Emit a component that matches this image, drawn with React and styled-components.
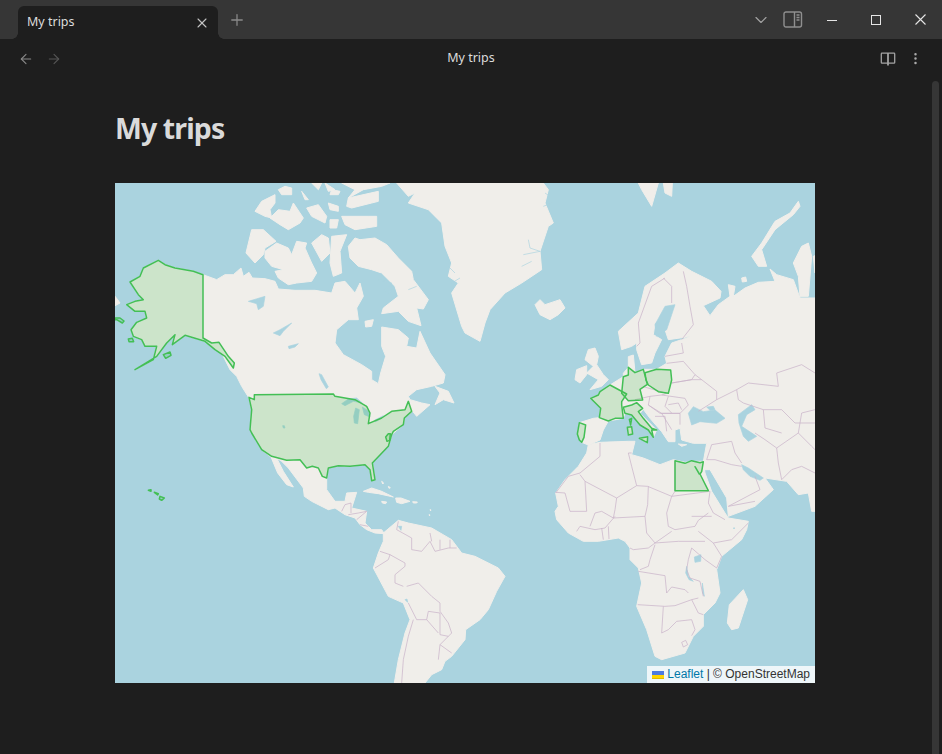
import React from "react";
import styled, { createGlobalStyle } from "styled-components";
import { ArrowLeft, ArrowRight, ChevronDown, EllipsisVertical, Plus, X } from "lucide-react";

const GlobalStyle = createGlobalStyle`
  html, body {
    margin: 0;
    height: 100%;
    background: #1e1e1e;
    overflow: hidden;
    font-family: "Noto Sans", "Open Sans", sans-serif;
  }
`;

// map data, in units of a third of a pixel (700x500 map = 2100x1500)
const LAND = [
  // north + central america
  "130,232 150,245 180,255 235,265 264,275 305,290 330,275 355,275 378,255 385,280 402,268 412,285 450,287 480,295 490,318 540,322 600,322 650,330 660,300 690,295 720,330 735,300 745,340 725,375 730,410 700,410 665,440 660,480 685,515 740,545 770,565 770,590 790,602 797,570 812,520 800,490 800,432 850,440 880,465 875,490 905,495 915,445 945,510 990,575 985,600 950,610 905,620 880,640 885,650 920,660 945,665 905,700 893,685 868,705 865,725 830,755 820,790 772,840 780,890 770,893 765,860 750,845 705,850 670,848 640,855 635,885 635,920 660,955 690,955 695,930 725,928 710,975 755,985 750,1020 770,1040 800,1040 808,1052 780,1050 755,1040 735,1025 720,1005 690,995 660,975 640,980 590,955 568,940 565,915 520,855 500,835 485,825 505,865 535,912 515,905 488,870 468,822 440,800 410,750 405,740 410,680 402,645 380,610 365,580 345,560 320,510 300,500 270,475 210,457 172,485 180,455 155,480 125,520 60,560 115,530 125,490 90,490 80,470 55,460 48,440 65,418 95,405 90,385 60,385 35,365 60,355 85,350 70,335 45,297 75,280 85,255",
  // arctic islands
  "735,170 780,165 815,185 850,225 890,265 895,290 940,350 925,378 905,375 918,428 880,415 850,385 800,392 805,375 850,340 840,310 800,270 770,260 730,250 705,225 700,190 720,165",
  "700,45 745,20 800,10 825,0 680,0 720,20",
  "700,45 790,25 790,55 770,60 710,75 695,70",
  "680,100 760,100 785,100 785,130 720,140 690,125",
  "575,75 610,65 635,100 630,120 590,100",
  "640,60 670,70 670,85 645,80",
  "645,110 670,110 665,135 645,135",
  "420,85 440,55 480,35 480,60 465,80 470,105 450,100",
  "465,105 490,80 525,85 535,60 565,105 555,120 520,140 495,125",
  "410,140 445,140 483,175 450,195 445,215 420,240 393,210",
  "450,205 485,180 520,195 530,215 545,175 575,180 570,195 590,240 605,270 590,295 545,300 520,305 490,285 480,265 505,260 470,250 450,225",
  "590,180 620,155 640,165 645,210 620,235",
  "650,160 695,155 675,205 680,270 655,280 645,240",
  "490,20 510,10 530,15 530,35 500,35",
  "560,25 580,50 570,50",
  "590,0 620,0 610,20",
  "630,0 660,20 640,25",
  "650,20 675,25 670,35 645,35",
  "750,415 775,410 770,430 752,432",
  "960,610 1000,625 1017,660 985,650 960,665 975,630",
  "0,340 8,350 15,360 0,368",
  // cuba, hispaniola, jamaica, puerto rico, antilles
  "745,925 770,915 800,925 835,942 790,932 760,928",
  "842,945 858,945 885,955 860,962 845,958",
  "800,955 815,957 812,962 802,960",
  "893,956 907,957 905,960 895,960",
  "945,980 947,980 947,984",
  "942,995 944,995 944,999",
  "800,895 806,900 803,903",
  "820,910 826,914 822,916",
  // south america
  "805,1050 850,1012 880,1020 950,1035 1010,1070 1040,1110 1080,1120 1150,1155 1170,1180 1145,1225 1120,1280 1095,1310 1052,1340 1050,1370 1010,1420 990,1435 980,1460 950,1475 930,1500 838,1500 850,1430 870,1350 885,1310 865,1260 820,1240 775,1155 790,1110 805,1075",
  // greenland
  "845,0 880,40 900,30 880,60 940,80 980,120 990,190 1010,240 1000,280 1030,300 1010,330 1040,430 1050,450 1095,475 1110,420 1125,380 1170,330 1220,300 1280,260 1275,205 1300,130 1315,120 1290,60 1300,20 1285,0",
  // iceland, uk, ireland
  "1260,365 1275,350 1290,365 1335,350 1350,375 1330,395 1305,410 1275,395 1265,375",
  "1420,500 1440,495 1450,520 1445,545 1465,575 1480,590 1460,610 1425,620 1450,590 1415,570 1435,550 1410,530",
  "1385,560 1415,548 1415,575 1395,600 1380,590",
  // svalbard, novaya zemlya and friends
  "1570,0 1630,0 1610,70 1580,20",
  "1645,0 1672,0 1670,40 1650,30",
  "2050,55 2025,90 1980,115 1940,180 1910,220 1930,250 1955,250 1940,200 1980,140 2035,95 2055,70",
  "2035,240 2060,190 2080,180 2090,220 2080,340 2055,340 2050,280",
  "2095,220 2100,218 2100,270",
  "1880,285 1892,282 1895,295 1882,297",
  // corsica, sardinia, sicily, crete
  "1543,709 1550,706 1547,726",
  "1537,733 1550,731 1553,753 1540,756",
  "1573,766 1598,761 1597,779",
  "1690,783 1715,785 1700,790",
  // eurasia
  "2100,345 2055,345 2035,290 1985,275 1965,258 1980,295 1930,298 1890,315 1855,340 1860,310 1840,305 1845,340 1810,365 1785,398 1765,368 1815,345 1818,325 1790,295 1730,265 1690,240 1650,270 1590,310 1570,390 1510,445 1520,500 1550,490 1565,480 1565,500 1580,545 1610,540 1620,510 1640,470 1615,455 1620,420 1660,385 1680,365 1650,440 1660,470 1730,460 1670,480 1650,520 1655,541 1625,559 1585,559 1560,569 1555,516 1540,521 1540,553 1525,571 1525,581 1485,606 1455,626 1450,636 1427,646 1457,676 1453,704 1435,706 1393,719 1387,753 1400,778 1420,786 1455,771 1465,741 1480,714 1525,706 1530,691 1550,696 1575,726 1600,741 1615,763 1625,741 1575,691 1585,679 1605,706 1640,746 1660,776 1680,776 1680,741 1695,736 1700,771 1735,781 1775,781 1765,836 1762,860 1785,860 1835,945 1840,1000 1920,970 1975,920 1950,885 2015,895 2050,935 2080,930 2090,985 2100,985",
  // africa
  "1420,785 1455,778 1540,775 1560,775 1550,815 1585,825 1635,845 1675,830 1710,838 1740,835 1765,835 1770,870 1790,925 1830,990 1840,1005 1900,1015 1895,1040 1880,1070 1820,1120 1805,1160 1815,1230 1800,1260 1765,1295 1765,1330 1735,1360 1710,1410 1640,1430 1620,1420 1595,1340 1565,1270 1580,1200 1570,1155 1545,1130 1545,1095 1530,1075 1510,1065 1450,1075 1405,1075 1360,1050 1325,1010 1320,985 1330,970 1322,930 1350,890 1390,850 1415,810",
  // madagascar
  "1885,1220 1898,1250 1870,1335 1850,1340 1837,1320 1843,1265",
];

const WATER = [
  // black sea, azov, caspian, persian gulf, bothnia
  "1720,691 1735,671 1765,686 1800,681 1830,706 1805,721 1755,716 1730,726",
  "1775,672 1795,670 1800,680 1785,682",
  "1910,665 1920,680 1895,695 1880,730 1925,760 1900,775 1885,760 1872,720 1870,695",
  "1880,845 1900,855 1945,885 1935,892 1905,880 1885,860",
  "1650,370 1680,365 1670,395 1655,440 1625,460 1620,425",
  // big lakes canada
  "400,355 450,340 445,370 430,380 425,362",
  "475,450 495,440 530,420 505,445 495,458",
  "520,490 550,482 540,492 522,497",
  "612,572 620,575 640,612 634,617 618,590",
  "810,320 825,310 828,325 815,332",
  // lake victoria, tanganyika, malawi
  "1738,1122 1758,1115 1757,1135 1740,1138",
  "1715,1150 1720,1180 1735,1195 1722,1190 1712,1170",
  "1762,1200 1768,1240 1763,1230",
  "1855,1035 1858,1034 1858,1038",
  // titicaca, maracaibo
  "870,1250 876,1248 878,1258",
  "850,1030 860,1030 858,1042",
];

const GREAT_LAKES = [
  "680,662 700,648 725,645 742,660 715,655 690,668",
  "722,675 733,680 728,722 718,720 716,700",
  "742,672 762,685 765,702 748,695",
  "778,712 805,698 800,706 782,716",
  "503,728 508,728 510,735 505,735",
];

// greenland fjords, baffin inlets
const FJORDS = [
  "1225,215 1275,205 1245,195 1240,170",
  "1250,235 1220,250",
  "1285,70 1312,60",
  "1290,30 1305,40",
  "1000,250 1020,270",
  "1010,300 1035,285",
  "880,320 905,310",
  "790,290 830,300 820,330",
];

const BORDERS = [
  // africa
  "1455,780 1455,820 1395,870 1360,880 1322,930",
  "1395,875 1410,895 1505,945 1565,908 1550,850 1540,810 1550,810",
  "1565,908 1598,910 1670,940 1680,925 1680,835",
  "1505,945 1500,980 1495,1005 1590,1000 1598,965 1600,910",
  "1410,895 1415,985 1365,985 1350,930 1322,928",
  "1425,1030 1440,990 1460,985 1495,1005",
  "1670,940 1655,990 1660,1030 1680,1040 1740,1030 1750,1012 1780,990",
  "1670,940 1785,925 1780,960 1795,990 1830,1010",
  "1590,1000 1595,1050 1620,1080 1670,1045",
  "1620,1080 1690,1075 1770,1075",
  "1750,1045 1795,1080 1850,1070 1900,1020",
  "1795,1080 1820,1120 1805,1155 1770,1130 1730,1095 1720,1130 1715,1160 1725,1185 1755,1195 1765,1240",
  "1570,1165 1650,1178 1655,1230 1670,1212 1710,1220 1720,1230",
  "1568,1265 1650,1270 1680,1268 1730,1250 1750,1245",
  "1645,1270 1640,1350 1660,1340 1685,1315 1730,1310 1740,1340 1730,1358",
  "1730,1250 1750,1290 1765,1295",
  "1545,1095 1555,1100 1600,1095 1620,1080",
  "1575,1160 1600,1150 1605,1130 1620,1085",
  "1385,1045 1395,1030 1440,1040 1470,1035 1500,1000",
  "1460,1035 1465,1070",
  "1480,1030 1482,1068",
  "1700,1378 1712,1372 1718,1385 1705,1392 1700,1378",
  // europe + asia
  "1650,285 1610,310 1570,420 1575,480 1565,490",
  "1645,285 1670,310 1670,360",
  "1705,265 1715,310 1725,370 1735,425 1700,470",
  "1650,520 1705,510 1700,480",
  "1655,541 1705,535 1740,575 1730,590 1670,600",
  "1740,575 1760,590 1805,625 1805,650 1750,685",
  "1670,600 1730,590 1760,590",
  "1865,620 1900,600 1990,610 1985,570 2060,545 2100,570",
  "1865,620 1870,650 1885,660 1945,680 2000,680 2040,720 2100,720",
  "1805,650 1865,620",
  "1605,640 1640,636 1710,646 1720,666 1695,691 1635,691 1600,666 1605,640",
  "1600,666 1640,691 1670,740",
  "1640,691 1695,691 1695,725",
  "1660,640 1650,670 1670,690",
  "1560,650 1605,640",
  "1585,611 1655,631 1640,636",
  "1620,700 1650,700 1655,745",
  "1660,665 1690,660 1700,680",
  "1730,1000 1790,1000",
  "1790,785 1850,775 1860,810 1880,840",
  "1985,795 1990,840 2000,890",
  "1790,785 1775,830 1800,830 1850,845 1880,850",
  "1920,880 1935,920 1840,970 1920,955",
  "1920,750 1950,770 1985,795 2050,750 2090,790 2100,800",
  "1945,680 1950,735 2000,750",
  "2050,750 2060,690 2100,680",
  "2000,890 2030,860 2060,850 2100,870",
  // south america, central america
  "850,1015 845,1040 890,1065 890,1100 920,1105 945,1075 960,1105 1000,1095 1025,1095",
  "1005,1070 1005,1095",
  "975,1070 975,1100",
  "945,1050 950,1075",
  "795,1105 825,1115 820,1130 780,1155",
  "825,1115 870,1140 870,1150 840,1175 840,1200 865,1210",
  "875,1210 910,1200 950,1240 975,1260 975,1285 1000,1320 1010,1350 975,1385 970,1430",
  "880,1260 905,1310 935,1310 940,1285 975,1290 975,1355 1000,1360",
  "895,1310 880,1360 865,1430 860,1500",
  "935,1310 970,1350",
  "975,1385 1010,1410",
  "680,985 690,965 708,960 708,990",
  "700,995 730,990 755,985 725,1010",
  "735,1025 760,1030",
];

const VISITED = [
  // alaska
  "130,232 150,245 180,255 235,265 264,275 264,465 290,480 312,478 340,520 358,540 355,555 330,520 300,500 270,475 210,457 172,485 180,455 155,480 125,520 60,560 115,530 125,490 90,490 80,470 55,460 48,440 65,418 95,405 90,385 60,385 35,365 60,355 85,350 70,335 45,297 75,280 85,255",
  "0,405 15,405 27,414 22,420 5,410 0,410",
  "40,468 52,466 56,476 42,476",
  "145,515 165,507 168,517 152,526",
  // contiguous usa
  "418,635 655,633 660,640 720,650 755,670 765,690 760,722 800,705 830,685 870,680 880,655 890,685 868,705 865,725 835,745 830,755 820,790 772,840 780,890 770,893 765,860 750,845 705,850 670,848 640,855 635,885 622,880 610,855 592,850 575,855 555,830 515,832 470,820 440,800 410,750 405,740 410,680 402,643 418,650",
  "820,752 826,752 824,772 816,775 812,762",
  // hawaii
  "100,922 108,920 108,925",
  "118,928 130,932 128,936",
  "135,940 148,945 140,952 133,948",
  // france
  "1485,606 1535,633 1520,656 1520,666 1525,706 1500,706 1480,714 1453,704 1457,676 1427,646 1450,636 1455,626",
  // germany
  "1540,553 1560,569 1585,559 1597,604 1575,619 1583,651 1540,653 1520,631 1525,581 1540,576",
  // poland
  "1590,569 1625,559 1667,561 1670,591 1660,631 1630,626 1600,606 1593,591",
  // italy
  "1525,673 1550,666 1565,659 1583,676 1570,686 1585,706 1610,736 1625,741 1610,741 1615,763 1600,741 1575,726 1550,696 1530,691",
  "1543,709 1550,706 1547,726",
  "1537,733 1550,731 1553,753 1540,756",
  "1573,766 1598,761 1597,779",
  // portugal
  "1393,719 1412,726 1407,763 1400,778 1393,771 1387,753",
  // egypt
  "1680,833 1710,841 1730,833 1755,839 1765,836 1760,866 1755,873 1780,923 1680,923",
  "1740,851 1753,873",
];

const Window = styled.div`
  display: flex;
  flex-direction: column;
  height: 754px;
  width: 942px;
  color: #dadada;
`;

const TitleBar = styled.header`
  display: flex;
  align-items: flex-end;
  height: 39px;
  padding-left: 18px;
  background: #363636;
`;

const Tab = styled.div`
  position: relative;
  display: flex;
  align-items: center;
  justify-content: space-between;
  box-sizing: border-box;
  width: 200px;
  height: 33px;
  padding: 0 8px 0 9px;
  background: #1e1e1e;
  border-radius: 6px 6px 0 0;
  font-size: 12.5px;
  &::before,
  &::after {
    content: "";
    position: absolute;
    bottom: 0;
    width: 6px;
    height: 6px;
  }
  &::before {
    left: -6px;
    background: radial-gradient(circle at 0 0, #363636 5.5px, #1e1e1e 6px);
  }
  &::after {
    right: -6px;
    background: radial-gradient(circle at 100% 0, #363636 5.5px, #1e1e1e 6px);
  }
`;

const TabTitle = styled.span`
  color: #dcdcdc;
  line-height: 1;
`;

const IconSlot = styled.span`
  display: flex;
  align-items: center;
  justify-content: center;
  width: ${(p) => p.$w || 20}px;
  color: ${(p) => p.$color || "#ababab"};
`;

const NewTab = styled(IconSlot)`
  height: 33px;
  margin: 0 0 3px 9px;
`;

const TabListButton = styled(IconSlot)`
  margin-right: 4px;
`;

const Spacer = styled.div`
  flex: 1;
`;

const WindowControls = styled.div`
  display: flex;
  align-items: center;
  height: 39px;
`;

const Toolbar = styled.nav`
  display: flex;
  align-items: center;
  justify-content: space-between;
  height: 39px;
  padding: 0 16px;
`;

const ToolGroup = styled.div`
  display: flex;
  align-items: center;
  gap: ${(p) => p.$gap || 8}px;
`;

const ToolTitle = styled.div`
  font-size: 12.5px;
  color: #dcdcdc;
  margin-top: -2px;
`;

const Body = styled.main`
  position: relative;
  flex: 1;
  padding-left: 115px;
`;

const Heading = styled.h1`
  margin: 0;
  padding-top: 30px;
  height: 75px;
  font-size: 28.5px;
  line-height: 40px;
  letter-spacing: -0.9px;
  font-weight: 700;
  color: #dadada;
`;

const MapBox = styled.section`
  position: relative;
  width: 700px;
  height: 500px;
  overflow: hidden;
  background: #aad3df;
`;

const MapSvg = styled.svg`
  display: block;
  width: 700px;
  height: 500px;
`;

// tiles are slightly soft, keep the coast from looking cut with a knife
const TileLayer = styled.g`
  filter: blur(0.35px);
`;

const Land = styled.polygon`
  fill: #f0eeea;
  stroke: #f0eeea;
  stroke-width: 3;
  stroke-linejoin: round;
`;

const Water = styled.polygon`
  fill: #aad3df;
  stroke: #aad3df;
  stroke-width: 2;
  stroke-linejoin: round;
`;

const Fjord = styled.polyline`
  fill: none;
  stroke: #aad3df;
  stroke-width: 2;
`;

const Border = styled.polyline`
  fill: none;
  stroke: #c9b4ca;
  stroke-width: 2.2;
  stroke-linejoin: round;
`;

const Visited = styled.polygon`
  fill: rgba(62, 189, 74, 0.2);
  stroke: #43bf55;
  stroke-width: 4.5;
  stroke-linejoin: round;
`;

const Attribution = styled.div`
  position: absolute;
  right: 0;
  bottom: 0;
  display: flex;
  align-items: center;
  height: 17px;
  padding: 0 5px;
  background: rgba(255, 255, 255, 0.8);
  font: 12px/17px "Liberation Sans", Arial, sans-serif;
  color: #333;
  white-space: pre;
`;

const LeafletLink = styled.a`
  color: #0078a8;
  text-decoration: none;
`;

const Flag = styled.svg`
  width: 12px;
  height: 8px;
  margin-right: 3px;
`;

const Scrollbar = styled.div`
  position: absolute;
  top: 3px;
  bottom: 0;
  right: 3px;
  width: 7px;
  background: #363636;
  border-radius: 4px 4px 0 0;
`;

const PanelIcon = () => (
  <svg width="20" height="17" viewBox="0 0 20 17" fill="none" stroke="#8f8f8f" strokeWidth="1.4">
    <rect x="1" y="1" width="17.5" height="15" rx="2" />
    <path d="M11.5 1v15M13.5 4h3M13.5 6.5h3M13.5 9h3" />
  </svg>
);

const BookIcon = () => (
  <svg width="16" height="16" viewBox="0 0 16 16" fill="none" stroke="#a3a3a3" strokeWidth="1.3">
    <path d="M8 2.2H2a.7.7 0 0 0-.7.7v8.6a.7.7 0 0 0 .7.7h6M8 2.2h6a.7.7 0 0 1 .7.7v8.6a.7.7 0 0 1-.7.7H8" />
    <path d="M8 2v12.6" strokeWidth="1.8" />
  </svg>
);

const App = () => (
  <Window>
    <GlobalStyle />
    <TitleBar>
      <Tab>
        <TabTitle>My trips</TabTitle>
        <IconSlot $w={16} $color="#c4c4c4">
          <X size={18} strokeWidth={1.6} />
        </IconSlot>
      </Tab>
      <NewTab $w={20} $color="#8a8a8a">
        <Plus size={18} strokeWidth={1.7} />
      </NewTab>
      <Spacer />
      <WindowControls>
        <TabListButton $w={20} $color="#a3a3a3">
          <ChevronDown size={20} strokeWidth={1.4} />
        </TabListButton>
        <IconSlot $w={36}>
          <PanelIcon />
        </IconSlot>
        <IconSlot $w={42} $color="#e6e6e6">
          <svg width="10" height="10" viewBox="0 0 10 10" stroke="currentColor" strokeWidth="1">
            <path d="M0 5.5h10" />
          </svg>
        </IconSlot>
        <IconSlot $w={46} $color="#e6e6e6">
          <svg width="10" height="10" viewBox="0 0 10 10" fill="none" stroke="currentColor" strokeWidth="1">
            <rect x="0.5" y="0.5" width="9" height="9" />
          </svg>
        </IconSlot>
        <IconSlot $w={43} $color="#e6e6e6">
          <svg width="11" height="11" viewBox="0 0 11 11" stroke="currentColor" strokeWidth="1.1">
            <path d="M.5.5l10 10M10.5.5l-10 10" />
          </svg>
        </IconSlot>
      </WindowControls>
    </TitleBar>
    <Toolbar>
      <ToolGroup $gap={8}>
        <IconSlot $color="#8a8a8a">
          <ArrowLeft size={16} strokeWidth={1.6} />
        </IconSlot>
        <IconSlot $color="#565656">
          <ArrowRight size={16} strokeWidth={1.6} />
        </IconSlot>
      </ToolGroup>
      <ToolTitle>My trips</ToolTitle>
      <ToolGroup $gap={8}>
        <IconSlot>
          <BookIcon />
        </IconSlot>
        <IconSlot>
          <EllipsisVertical size={15} strokeWidth={2} />
        </IconSlot>
      </ToolGroup>
    </Toolbar>
    <Body>
      <Scrollbar />
      <Heading>My trips</Heading>
      <MapBox>
        <MapSvg viewBox="0 0 2100 1500">
          <TileLayer>
            {LAND.map((pts) => (
              <Land key={pts} points={pts} />
            ))}
            {WATER.map((pts) => (
              <Water key={pts} points={pts} />
            ))}
            {GREAT_LAKES.map((pts) => (
              <Water key={pts} points={pts} />
            ))}
            {FJORDS.map((pts) => (
              <Fjord key={pts} points={pts} />
            ))}
            {BORDERS.map((pts) => (
              <Border key={pts} points={pts} />
            ))}
          </TileLayer>
          {VISITED.map((pts) => (
            <Visited key={pts} points={pts} />
          ))}
        </MapSvg>
        <Attribution>
          <Flag viewBox="0 0 12 8">
            <path fill="#4C7BE1" d="M0 0h12v4H0z" />
            <path fill="#FFD500" d="M0 4h12v3H0z" />
            <path fill="#E0BC00" d="M0 7h12v1H0z" />
          </Flag>
          <LeafletLink href="#">Leaflet</LeafletLink>
          {" | © OpenStreetMap"}
        </Attribution>
      </MapBox>
    </Body>
  </Window>
);

export default App;
